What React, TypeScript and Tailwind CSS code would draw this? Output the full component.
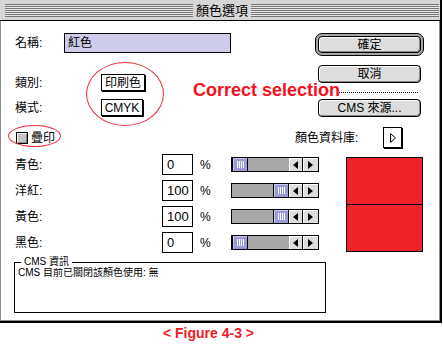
import React from "react";

const font = { fontFamily: "'Liberation Sans', 'Noto Sans CJK TC', sans-serif" };

function Slider({ full }: { full: boolean }) {
  return (
    <div className="w-[88px] h-[15px] border border-black flex bg-[#a8a8a8]">
      <div className={"flex-1 flex " + (full ? "justify-end" : "justify-start")}>
        <div className="w-[16px] h-full bg-[#9a9ad8] border-r border-l border-black flex items-center justify-center gap-[1px] shadow-[inset_1px_1px_0_#c8c8f0]">
          <div className="w-[1px] h-[7px] bg-white" />
          <div className="w-[1px] h-[7px] bg-white" />
          <div className="w-[1px] h-[7px] bg-white" />
          <div className="w-[1px] h-[7px] bg-white" />
        </div>
      </div>
      <div className="w-[14px] h-full bg-[#dddddd] border-r border-black flex items-center justify-center shadow-[inset_1px_1px_0_#fff]">
        <svg width="5" height="8" viewBox="0 0 5 8"><polygon points="5,0 5,8 0,4" fill="#000" /></svg>
      </div>
      <div className="w-[15px] h-full bg-[#dddddd] flex items-center justify-center shadow-[inset_1px_1px_0_#fff]">
        <svg width="5" height="8" viewBox="0 0 5 8"><polygon points="0,0 0,8 5,4" fill="#000" /></svg>
      </div>
    </div>
  );
}

function Row({ label, value, full }: { label: string; value: string; full: boolean }) {
  return (
    <div className="h-[21px] flex items-center">
      <div className="w-[161px] pl-[14px] text-[12px] leading-none">{label}</div>
      <div className="w-[31px] h-[21px] border border-black flex items-center pl-[4px] text-[13px] leading-none">{value}</div>
      <div className="w-[38px] pl-[7px] text-[12px] leading-none">%</div>
      <Slider full={full} />
    </div>
  );
}

export default function App() {
  return (
    <div className="w-[443px] h-[345px] bg-white overflow-hidden relative text-black" style={font}>
      <div className="w-[442px] h-[323px] flex flex-col border-r-2 border-b-2 border-black">
        <div className="h-[21px] shrink-0 bg-[#d6d6d6] border-b border-black flex items-center pl-[5px] pr-[1px]">
          <div className="flex-1 h-[13px] bg-[repeating-linear-gradient(to_bottom,#777777_0px,#777777_1px,#e6e6e6_1px,#e6e6e6_2px)]" />
          <div className="px-[3px] text-[13px] leading-none">顏色選項</div>
          <div className="flex-1 h-[13px] bg-[repeating-linear-gradient(to_bottom,#777777_0px,#777777_1px,#e6e6e6_1px,#e6e6e6_2px)]" />
        </div>
        <div className="flex-1 flex flex-col border-l border-r border-b border-[#8a8a8a] bg-white">
          {/* top section */}
          <div className="flex mt-[12px]">
            <div className="w-[314px] flex flex-col">
              <div className="h-[20px] flex items-center">
                <div className="w-[63px] pl-[14px] text-[12px] leading-none">名稱:</div>
                <div className="w-[167px] h-[20px] border border-black bg-[#cdcbe8] flex items-center pl-[3px] text-[12px] leading-none">紅色</div>
              </div>
              <div className="flex items-center mt-[21px]">
                <div className="w-[100px] pl-[14px] text-[12px] leading-none">類別:</div>
                <div className="h-[17px] w-[44px] border border-black bg-white shadow-[1px_1px_0_#000] flex items-center justify-center text-[12px] leading-none">印刷色</div>
              </div>
              <div className="flex items-center mt-[8px]">
                <div className="w-[100px] pl-[14px] text-[12px] leading-none">模式:</div>
                <div className="h-[17px] w-[42px] border border-black bg-white shadow-[1px_1px_0_#000] flex items-center justify-center text-[12px] leading-none">CMYK</div>
              </div>
            </div>
            <div className="flex flex-col">
              <div className="w-[109px] h-[23px] rounded-[7px] border border-black bg-[#a6a6a6] p-[2px]">
                <div className="h-full rounded-[4px] border border-black bg-[#dddddd] shadow-[inset_1px_1px_0_#fff,inset_-1px_-1px_0_#888] flex items-center justify-center text-[12px] leading-none">確定</div>
              </div>
              <div className="ml-[3px] mt-[9px] w-[103px] h-[18px] rounded-[4px] border border-black bg-[#dddddd] shadow-[inset_1px_1px_0_#fff,inset_-1px_-1px_0_#888] flex items-center justify-center text-[12px] leading-none">取消</div>
              <div className="ml-[22px] mt-[9px] w-[81px] h-0 border-t border-dotted border-black" />
              <div className="ml-[3px] mt-[6px] w-[103px] h-[18px] rounded-[4px] border border-black bg-[#dddddd] shadow-[inset_1px_1px_0_#fff,inset_-1px_-1px_0_#888] flex items-center justify-center text-[12px] leading-none">CMS 來源...</div>
            </div>
          </div>
          {/* overprint row */}
          <div className="h-[21px] mt-[10px] flex items-center">
            <div className="w-[294px] pl-[15px] flex items-center">
              <div className="w-[12px] h-[12px] border border-black bg-[#c4c4c4] shadow-[inset_1px_1px_0_#eee,inset_-1px_-1px_0_#888]" />
              <div className="ml-[3px] text-[12px] leading-none">疊印</div>
            </div>
            <div className="w-[88px] text-[12px] leading-none">顏色資料庫:</div>
            <div className="w-[19px] h-[21px] border border-black bg-white shadow-[1px_1px_0_#000] flex items-center justify-center">
              <svg width="6" height="10" viewBox="0 0 6 10"><polygon points="0.5,0.5 5.5,5 0.5,9.5" fill="none" stroke="#000" strokeWidth="1" /></svg>
            </div>
          </div>
          {/* CMYK */}
          <div className="flex mt-[6px]">
            <div className="w-[345px] flex flex-col gap-[5px]">
              <Row label="青色:" value="0" full={false} />
              <Row label="洋紅:" value="100" full={true} />
              <Row label="黃色:" value="100" full={true} />
              <Row label="黑色:" value="0" full={false} />
            </div>
            <div className="mt-[3px] w-[77px] h-[95px] border border-black flex flex-col">
              <div className="flex-1 bg-[#ee2229]" />
              <div className="h-[1px] bg-black" />
              <div className="flex-1 bg-[#ee2229]" />
            </div>
          </div>
          {/* CMS info */}
          <div className="relative ml-[13px] mt-[9px] w-[312px] h-[51px] border border-black">
            <div className="absolute -top-[7px] left-[6px] bg-white px-[3px] text-[10px] leading-[12px]">CMS 資訊</div>
            <div className="pl-[3px] pt-[4px] text-[10px] leading-[12px]">CMS 目前已關閉該顏色使用: 無</div>
          </div>
        </div>
      </div>
      <div className="h-[20px] flex items-center pl-[163px] text-[14px] font-bold text-[#ee1c25] leading-none">&lt; Figure 4-3 &gt;</div>

      {/* annotations */}
      <div className="absolute left-[86px] top-[62px] w-[78px] h-[64px] rounded-[50%] border border-[#e8323c]" />
      <div className="absolute left-[8px] top-[125px] w-[53px] h-[22px] rounded-[50%] border border-[#e8323c]" />
      <div className="absolute left-[193px] top-[81px] text-[18px] font-bold text-[#f5101c] leading-none">Correct selection</div>
    </div>
  );
}
